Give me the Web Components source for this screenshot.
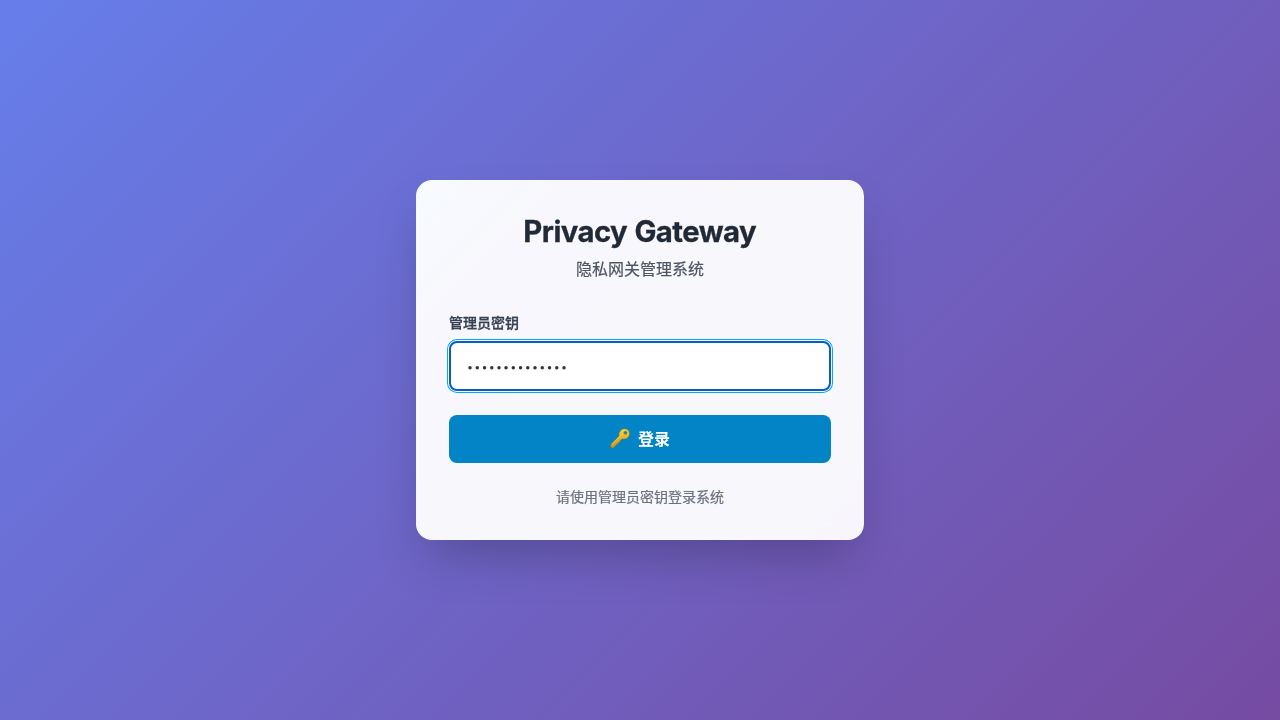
<!DOCTYPE html>
<html lang="zh-CN">
<head>
<meta charset="utf-8">
<title>Privacy Gateway</title>
<style>
html,body{margin:0;height:100%}
body{font-family:Inter,"Noto Sans CJK SC",sans-serif;-webkit-font-smoothing:antialiased}
</style>
</head>
<body>
<login-page>
  <login-card heading="Privacy Gateway" subtitle="隐私网关管理系统">
    <secret-field label="管理员密钥"></secret-field>
    <primary-button><key-icon slot="icon"></key-icon>登录</primary-button>
    <span slot="footer">请使用管理员密钥登录系统</span>
  </login-card>
</login-page>
<script>
const define = (name, html, setup) => customElements.define(name, class extends HTMLElement {
  constructor() {
    super();
    this.attachShadow({ mode: 'open' }).innerHTML = html;
  }
  connectedCallback() { if (setup) setup(this, this.shadowRoot); }
});

define('login-page', `<style>
:host{display:flex;align-items:center;justify-content:center;height:100vh;background:linear-gradient(135deg,#667eea 0%,#764ba2 100%)}
</style><slot></slot>`);

define('login-card', `<style>
:host{display:block;box-sizing:border-box;width:448px;height:360px;padding:33px;border-radius:16px;background:linear-gradient(135deg,rgba(247,251,255,.8),rgba(247,250,255,0) 110px),rgba(255,255,255,.95);backdrop-filter:blur(10px);box-shadow:0 25px 50px -12px rgba(0,0,0,.25)}
header{text-align:center;margin-bottom:32px}
h1{margin:0 0 7px;padding:1px .6px 0 0;font-size:29.3px;line-height:36px;font-weight:700;font-optical-sizing:none;letter-spacing:-.55px;word-spacing:.8px;color:#1f2937;-webkit-text-stroke:.3px #1f2937}
p{margin:0;font-size:16px;line-height:24px;color:#4b5563;-webkit-text-stroke:.2px #4b5563}
main{display:flex;flex-direction:column;gap:24px}
footer{margin-top:24px;text-align:center;font-size:14px;line-height:20px;color:#6b7280;-webkit-text-stroke:.2px #6b7280}
</style><header><h1></h1><p></p></header><main><slot></slot></main><footer><slot name="footer"></slot></footer>`,
(el, root) => {
  root.querySelector('h1').textContent = el.getAttribute('heading');
  root.querySelector('p').textContent = el.getAttribute('subtitle');
});

define('secret-field', `<style>
:host{display:block}
label{display:block;margin-bottom:8px;font-size:14px;line-height:20px;font-weight:500;color:#374151;-webkit-text-stroke:.3px #374151}
input{display:block;box-sizing:border-box;width:100%;height:50px;padding:2px 16px 0;border:2px solid #005fcc;border-radius:8px;outline:0;background:#fff;color:#333;font:10.8px/24px Inter,sans-serif;letter-spacing:1.15px;box-shadow:0 0 0 1px #fff,0 0 0 2px #0ea5e9}
</style><label for="key"></label><input id="key" type="password" value="admin-password">`,
(el, root) => { root.querySelector('label').textContent = el.getAttribute('label'); });

define('primary-button', `<style>
:host{display:block}
button{display:flex;align-items:center;justify-content:center;gap:8px;width:100%;height:48px;padding:0;border:0;border-radius:8px;background:#0284c7;color:#fff;font-family:inherit;font-size:16px;line-height:24px;font-weight:600}
</style><button type="button"><slot name="icon"></slot><span><slot></slot></span></button>`);

define('key-icon', `<style>
:host{display:block;width:20px;height:22px}
svg{display:block;overflow:visible}
</style><svg width="20" height="20" viewBox="0 0 22 22">
<defs><linearGradient id="g" x1="0" y1="0" x2="0" y2="1"><stop stop-color="#fbd63b"/><stop offset="1" stop-color="#d0900d"/></linearGradient></defs>
<path d="M12.1 2.6C14 .6 17.9.6 19.9 2.6s1.9 5.4-.1 7.6c-1.7 1.8-4.2 2.2-6.4 1.5l-2.5 2.2-.1 1.6-1.7.1-.2 1.6-1.6.1-.3 1.6-1.5.2-.3 1.5-1 .1-.5 1.2-1.3-.2-1.5-1 .2-2.6 9.1-9.3c-.6-1.8-.2-3.7 1.3-5.1z" fill="url(#g)" stroke="#bd820b" stroke-width=".5"/>
<path d="M2.1 17.9 12 8" stroke="#ffe36a" stroke-width=".8" opacity=".8"/>
<circle cx="17" cy="5.2" r="1.9" fill="#1684b8" stroke="#a88b20" stroke-width=".5"/>
</svg>`);
</script>
</body>
</html>
